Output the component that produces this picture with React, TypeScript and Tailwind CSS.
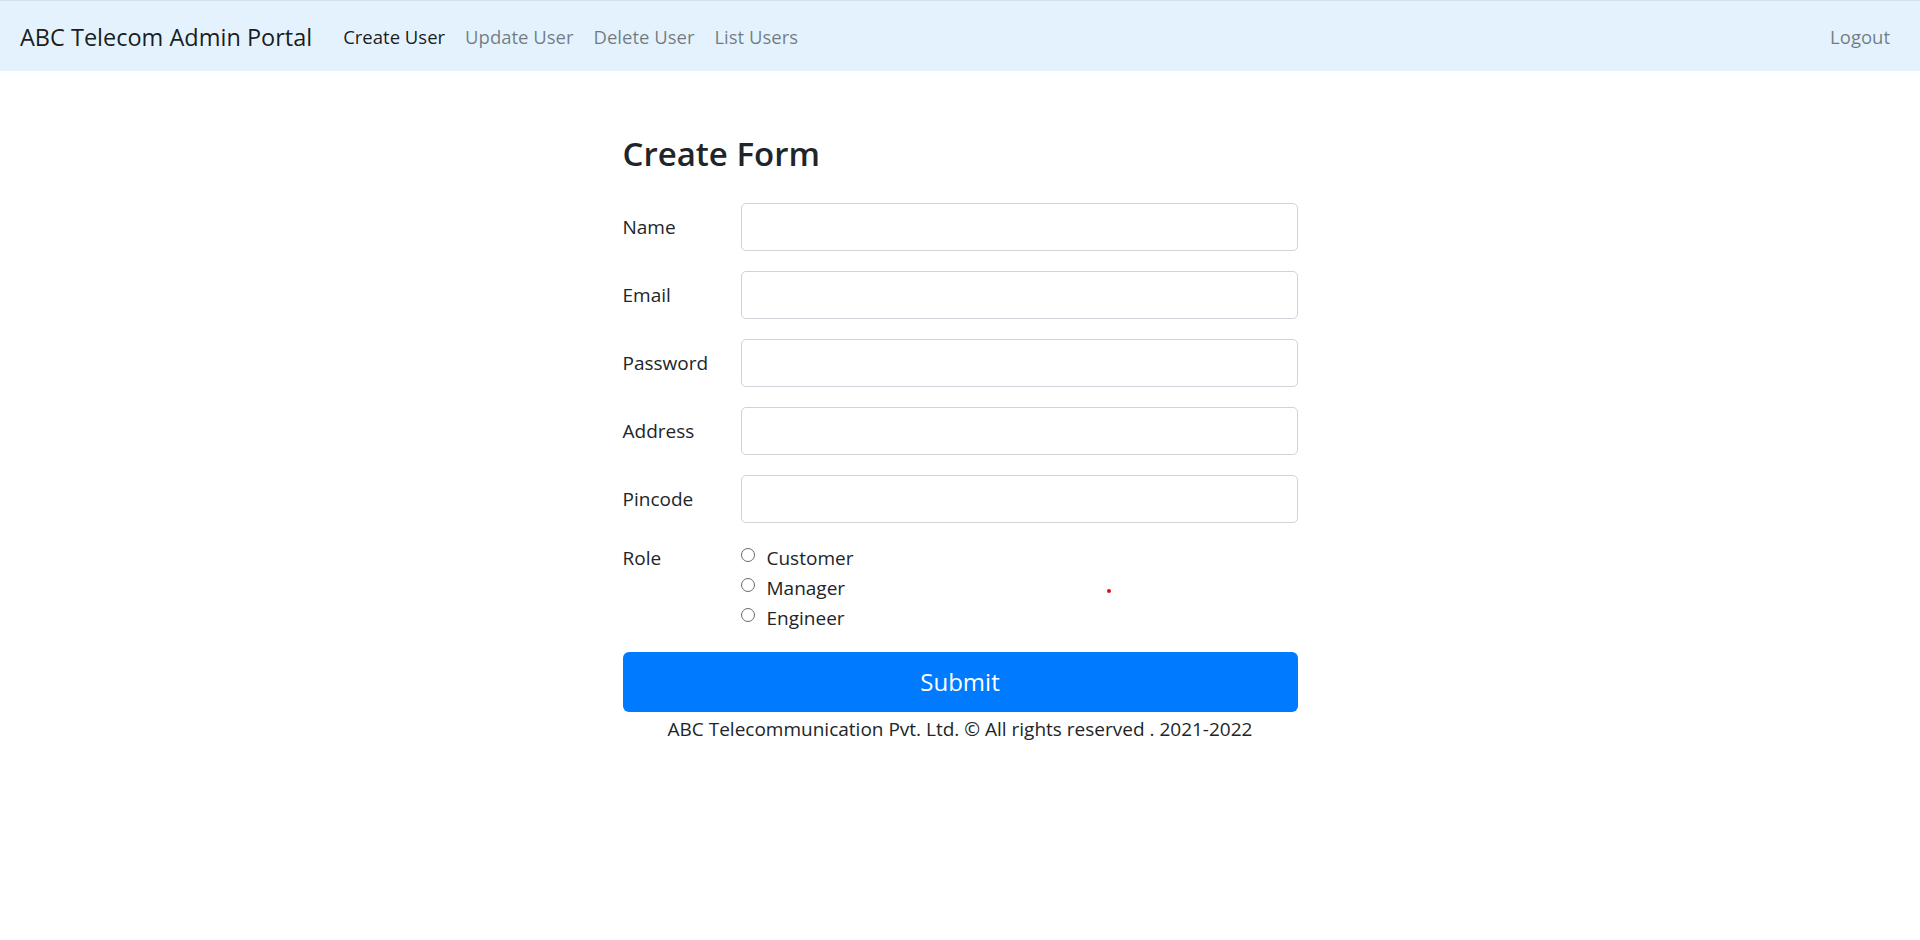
import React from "react";

const font = { fontFamily: '"Open Sans", "Noto Sans", sans-serif' };

function Field({ label, type = "text" }: { label: string; type?: string }) {
  return (
    <div className="flex items-center h-[48px] mb-[20px]">
      <label className="w-[118px] shrink-0 text-[19px] leading-[30px] text-[#212529]">{label}</label>
      <input
        type={type}
        className="flex-1 h-[48px] border border-[#ced4da] rounded-[5px] bg-white px-[15px] text-[19px] outline-none"
      />
    </div>
  );
}

function Radio({ label }: { label: string }) {
  return (
    <label className="flex items-start h-[30px]">
      <span className="mt-[5px] w-[14px] h-[14px] rounded-full border border-[#6b6b6b] bg-white shrink-0" />
      <span className="ml-[12px] text-[19px] leading-[30px] text-[#212529]">{label}</span>
    </label>
  );
}

export default function App() {
  return (
    <div className="min-h-[940px] bg-white text-[#212529]" style={font}>
      <nav className="h-[71px] bg-[#e3f2fd] border-t border-[#d3e2ee] flex items-center px-[20px] pt-[2px]">
        <span className="text-[23.5px] leading-[36px] text-black/90 mr-[21px]">ABC Telecom Admin Portal</span>
        <div className="flex items-center">
          <a className="px-[10px] text-[18.5px] leading-[30px] text-black/90">Create User</a>
          <a className="px-[10px] text-[18.5px] leading-[30px] text-black/50">Update User</a>
          <a className="px-[10px] text-[18.5px] leading-[30px] text-black/50">Delete User</a>
          <a className="px-[10px] text-[18.5px] leading-[30px] text-black/50">List Users</a>
        </div>
        <a className="ml-auto px-[10px] text-[18.5px] leading-[30px] text-black/50">Logout</a>
      </nav>

      <div className="w-[675px] mx-auto">
        <h3 className="mt-[63px] mb-[29px] text-[33px] leading-[40px] font-semibold text-[#212529]">Create Form</h3>
        <Field label="Name" />
        <Field label="Email" type="email" />
        <Field label="Password" type="password" />
        <Field label="Address" />
        <Field label="Pincode" />
        <div className="relative flex mb-[19px]">
          <div className="w-[118px] shrink-0 text-[19px] leading-[30px]">Role</div>
          <div className="flex flex-col">
            <Radio label="Customer" />
            <Radio label="Manager" />
            <Radio label="Engineer" />
          </div>
          <span className="absolute left-[484px] top-[46px] w-[4px] h-[4px] rounded-full bg-[#e01010]" />
        </div>
        <button className="w-full h-[60px] rounded-[6px] bg-[#007bff] text-white text-[24px] leading-[36px]">
          Submit
        </button>
        <div className="text-center text-[19px] leading-[30px] mt-[2px] text-[#212529]">
          ABC Telecommunication Pvt. Ltd. © All rights reserved . 2021-2022
        </div>
      </div>
    </div>
  );
}
